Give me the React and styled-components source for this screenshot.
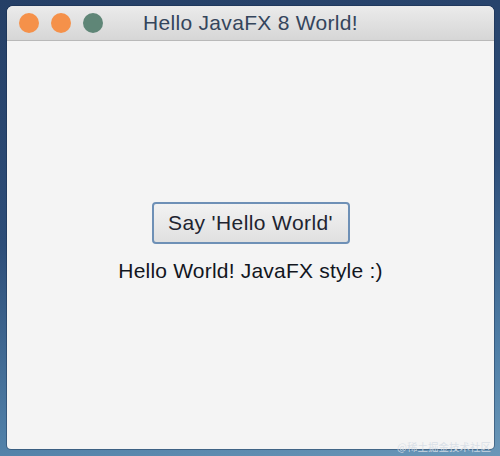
import React from 'react';
import styled, { createGlobalStyle } from 'styled-components';

const GlobalStyle = createGlobalStyle`
    html, body {
        margin: 0;
        padding: 0;
    }
    body {
        font-family: "Liberation Sans", Arial, sans-serif;
    }
`;

const Desktop = styled.div`
    position: relative;
    width: 500px;
    height: 456px;
    box-sizing: border-box;
    padding: 6px 6px 7px 7px;
    background: linear-gradient(170deg, #253f66 0%, #2d4d78 45%, #4f7ea6 80%, #6a97b8 100%);
    overflow: hidden;
`;

const Window = styled.div`
    height: 100%;
    display: flex;
    flex-direction: column;
    border-radius: 6px 6px 4px 4px;
    overflow: hidden;
    background: #f4f4f4;
    box-shadow: 0 0 0 1px rgba(20, 40, 70, 0.4);
`;

const TitleBar = styled.div`
    position: relative;
    height: 34px;
    display: flex;
    align-items: center;
    justify-content: center;
    background: linear-gradient(#ebebeb, #d6d6d6);
    border-bottom: 1px solid #b9b9b9;
`;

const Lights = styled.div`
    position: absolute;
    left: 12px;
    top: 7px;
    display: flex;
    gap: 12px;
`;

const Light = styled.span`
    width: 20px;
    height: 20px;
    border-radius: 50%;
    background: ${p => p.$color};
`;

const Title = styled.div`
    font-size: 21px;
    color: #34455c;
    letter-spacing: 0.3px;
`;

const Content = styled.div`
    flex: 1;
    display: flex;
    flex-direction: column;
    align-items: center;
    justify-content: center;
    gap: 15px;
    padding-bottom: 5px;
`;

const SayButton = styled.button`
    width: 198px;
    height: 42px;
    box-sizing: border-box;
    border: 2px solid #6e90b6;
    border-radius: 4px;
    background: linear-gradient(#f2f2f2, #e0e0e0);
    font-family: "Liberation Sans", Arial, sans-serif;
    font-size: 21px;
    letter-spacing: 0.4px;
    color: #1e2430;
    padding: 0;
    cursor: pointer;
`;

const Message = styled.div`
    font-size: 21px;
    letter-spacing: 0.2px;
    color: #12161e;
`;

const Watermark = styled.div`
    position: absolute;
    right: 9px;
    bottom: 4px;
    font-family: "Noto Sans CJK SC", sans-serif;
    font-size: 10.5px;
    line-height: 1;
    color: rgba(215, 222, 230, 0.9);
`;

export default function App() {
    return (
        <>
            <GlobalStyle />
            <Desktop>
                <Window>
                    <TitleBar>
                        <Lights>
                            <Light $color="#f5914a" />
                            <Light $color="#f5914a" />
                            <Light $color="#5f8677" />
                        </Lights>
                        <Title>Hello JavaFX 8 World!</Title>
                    </TitleBar>
                    <Content>
                        <SayButton>Say 'Hello World'</SayButton>
                        <Message>Hello World! JavaFX style :)</Message>
                    </Content>
                </Window>
                <Watermark>@稀土掘金技术社区</Watermark>
            </Desktop>
        </>
    );
}
